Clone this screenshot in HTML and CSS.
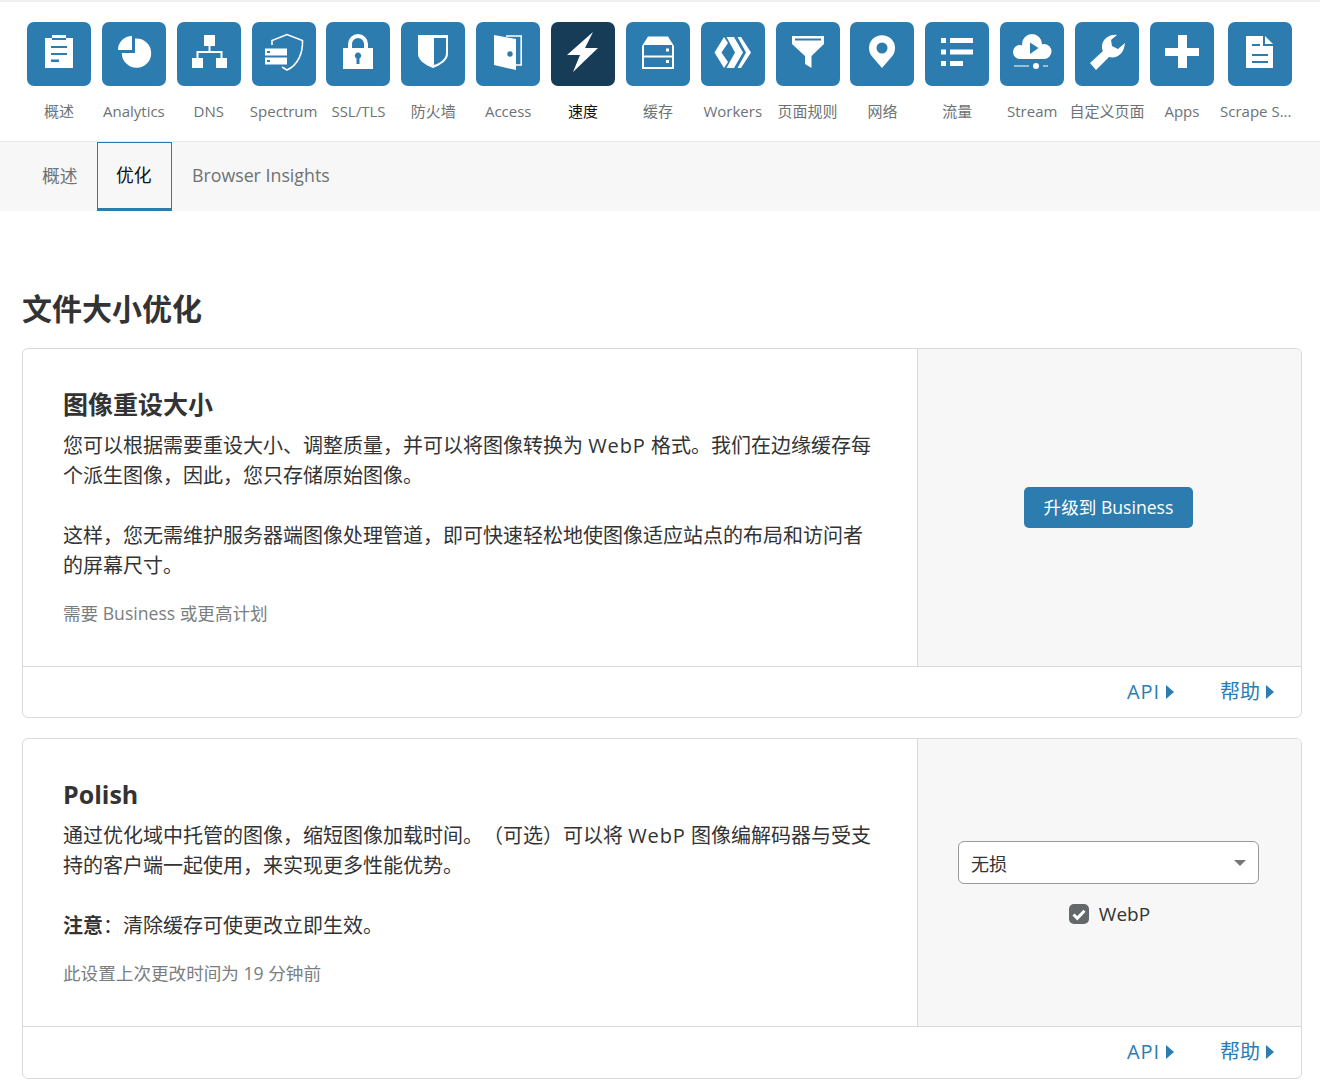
FILE: index.html
```html
<!DOCTYPE html>
<html lang="zh-CN">
<head>
  <meta charset="UTF-8">
  <title>速度 - 优化</title>
  <link rel="stylesheet" href="styles.css">
</head>
<body>
  <!-- App Navigation -->
  <nav class="app-nav">
    <a class="nav-item">
      <span class="nav-icon"><svg viewBox="0 0 64 64"><path class="w" d="M18 16H25V13H39V16H46V46H18Z"/><path class="b" d="M24 24H40V26H24ZM24 31H40V33H24ZM24 37.500H32V40H24ZM25 16H39V18H25Z"/></svg></span>
      <span class="nav-label">概述</span>
    </a>
    <a class="nav-item">
      <span class="nav-icon"><svg viewBox="0 0 64 64"><path class="w" d="M30 28H16A14 14 0 0 1 30 14ZM33 16.500A14.700 14.700 0 1 1 19.800 31H33Z"/></svg></span>
      <span class="nav-label">Analytics</span>
    </a>
    <a class="nav-item">
      <span class="nav-icon"><svg viewBox="0 0 64 64"><path class="w" d="M27 13H38V24H33.500V29H45.500V36H50V46H39V36H43.500V31H21.500V36H26V46H15V36H19.500V29H31.500V24H27Z"/></svg></span>
      <span class="nav-label">DNS</span>
    </a>
    <a class="nav-item">
      <span class="nav-icon"><svg viewBox="0 0 64 64"><path class="o" d="M20 23V18.500L35 12.500L50.500 18.500C51 31 46 43 35 48L30 45"/><path class="w" d="M13 26.500H35V33.500H13ZM13 35.500H35V42.500H13Z"/><path class="b" d="M15 29H18V31H15ZM15 38H18V40H15Z"/></svg></span>
      <span class="nav-label">Spectrum</span>
    </a>
    <a class="nav-item">
      <span class="nav-icon"><svg viewBox="0 0 64 64"><path class="o thick" d="M24 27V22A8 8 0 0 1 40 22V27"/><path class="w" d="M17 26H47V47H17Z"/><path class="b" d="M30.500 36.500A3.200 3.200 0 1 1 33.500 36.500V42H30.500Z"/></svg></span>
      <span class="nav-label">SSL/TLS</span>
    </a>
    <a class="nav-item">
      <span class="nav-icon"><svg viewBox="0 0 64 64"><path class="w" d="M17 13H47V32C47 38 40 43 32 46C24 43 17 38 17 32Z"/><path class="b" d="M33 16H45V31C45 37 39 41 33 43Z"/></svg></span>
      <span class="nav-label">防火墙</span>
    </a>
    <a class="nav-item">
      <span class="nav-icon"><svg viewBox="0 0 64 64"><path class="o" d="M30 14H45.200V43H40"/><path class="w" d="M18 13L40 17V48L18 43Z"/><circle class="b" cx="34" cy="32" r="2.700"/></svg></span>
      <span class="nav-label">Access</span>
    </a>
    <a class="nav-item active">
      <span class="nav-icon"><svg viewBox="0 0 64 64"><path class="w" d="M42 10L16 33H29L22 50L47 26H34Z"/></svg></span>
      <span class="nav-label">速度</span>
    </a>
    <a class="nav-item">
      <span class="nav-icon"><svg viewBox="0 0 64 64"><path class="w" d="M16 24L22 14.500H42L48 24V47H16Z"/><path class="b" d="M18 23H46V33.500H18ZM18 35.500H46V45H18Z"/><path class="w" d="M40 26.500H43V29.500H40ZM40 38H43V41H40Z"/></svg></span>
      <span class="nav-label">缓存</span>
    </a>
    <a class="nav-item">
      <span class="nav-icon"><svg viewBox="0 0 64 64"><path class="w" d="M23 15L13.500 30.500L23 46L27 40L20.500 30.500L27 21ZM25.500 15H33L42 30.500L33 46H25.500L34 30.500ZM36.500 15H40L50 30.500L40 46H36.500L45 30.500Z"/></svg></span>
      <span class="nav-label">Workers</span>
    </a>
    <a class="nav-item">
      <span class="nav-icon"><svg viewBox="0 0 64 64"><path class="w" d="M16 14H48V22L35.500 34V46L29 42V34L16 22Z"/><path class="b" d="M19 16.500H45V18.500H19Z"/></svg></span>
      <span class="nav-label">页面规则</span>
    </a>
    <a class="nav-item">
      <span class="nav-icon"><svg viewBox="0 0 64 64"><path class="w" d="M32 46L22.500 35A13 13 0 1 1 41.500 35Z"/><circle class="b" cx="32" cy="26" r="5.500"/></svg></span>
      <span class="nav-label">网络</span>
    </a>
    <a class="nav-item">
      <span class="nav-icon"><svg viewBox="0 0 64 64"><path class="w" d="M16 16H21V21H16ZM25 16H48V21H25ZM16 27.500H21V32.500H16ZM25 27.500H48V32.500H25ZM16 39H21V44H16ZM25 39H38V44H25Z"/></svg></span>
      <span class="nav-label">流量</span>
    </a>
    <a class="nav-item">
      <span class="nav-icon"><svg viewBox="0 0 64 64"><circle class="w" cx="32" cy="22" r="10"/><circle class="w" cx="20" cy="30" r="7"/><circle class="w" cx="44" cy="29.500" r="7.500"/><path class="w" d="M20 26H44V37H20Z"/><path class="b" d="M30 20.500L38.500 26L30 32Z"/><circle class="w" cx="36" cy="44" r="3"/><path class="w dim" d="M14 43H29V45H14ZM43 43H48V45H43Z"/></svg></span>
      <span class="nav-label">Stream</span>
    </a>
    <a class="nav-item">
      <span class="nav-icon"><svg viewBox="0 0 64 64"><path class="w" d="M42 13C35 12 28 16 27 24C27 26 27 28 28 29L15 41L21 48L34 35C42 37 49 32 50 21L43 27L37 24L36 18Z"/></svg></span>
      <span class="nav-label">自定义页面</span>
    </a>
    <a class="nav-item">
      <span class="nav-icon"><svg viewBox="0 0 64 64"><path class="w" d="M28 13H37V26H49V34H37V46H28V34H15V26H28Z"/></svg></span>
      <span class="nav-label">Apps</span>
    </a>
    <a class="nav-item last">
      <span class="nav-icon"><svg viewBox="0 0 64 64"><path class="w" d="M18 14H35V24H45V46H18ZM37 14L45 22H37Z"/><path class="b" d="M24 22H32V24H24ZM24 32H40V34H24ZM24 39H40V41H24Z"/></svg></span>
      <span class="nav-label">Scrape S...</span>
    </a>
  </nav>

  <!-- Sub Tabs -->
  <div class="tabs">
    <a class="tab">概述</a>
    <a class="tab active">优化</a>
    <a class="tab">Browser Insights</a>
  </div>

  <main class="content">
    <h2 class="section-title">文件大小优化</h2>

    <section class="card">
      <div class="card-body">
        <div class="card-text">
          <h3>图像重设大小</h3>
          <p>您可以根据需要重设大小、调整质量，并可以将图像转换为 <span class="en">WebP</span> 格式。我们在边缘缓存每<br>个派生图像，因此，您只存储原始图像。<br><br>这样，您无需维护服务器端图像处理管道，即可快速轻松地使图像适应站点的布局和访问者<br>的屏幕尺寸。</p>
          <p class="note">需要 Business 或更高计划</p>
        </div>
        <div class="card-control">
          <button class="btn">升级到 Business</button>
        </div>
      </div>
      <div class="card-footer">
        <a class="link"><span class="en">API</span></a>
        <a class="link">帮助</a>
      </div>
    </section>

    <section class="card">
      <div class="card-body">
        <div class="card-text">
          <h3>Polish</h3>
          <p>通过优化域中托管的图像，缩短图像加载时间。（可选）可以将 <span class="en">WebP</span> 图像编解码器与受支<br>持的客户端一起使用，来实现更多性能优势。<br><br><strong>注意</strong>：清除缓存可使更改立即生效。</p>
          <p class="note">此设置上次更改时间为 19 分钟前</p>
        </div>
        <div class="card-control">
          <div class="select-wrap">
            <select>
              <option>无损</option>
              <option>有损</option>
              <option>关闭</option>
            </select>
          </div>
          <label class="check">
            <svg viewBox="0 0 20 20"><rect width="20" height="20" rx="5" fill="#63686b"/><path d="M4.500 10.500L8.300 14.300L15.500 6.700" fill="none" stroke="#fff" stroke-width="3"/></svg>
            WebP
          </label>
        </div>
      </div>
      <div class="card-footer">
        <a class="link"><span class="en">API</span></a>
        <a class="link">帮助</a>
      </div>
    </section>
  </main>
</body>
</html>
```

FILE: styles.css
```css
/* General Reset */
* {
  margin: 0;
  padding: 0;
  box-sizing: border-box;
}

html, body {
  height: 100%;
  overflow: hidden;
}

body {
  font-family: 'Open Sans', 'Noto Sans CJK SC', sans-serif;
  color: #333;
  background: #fff;
  text-spacing-trim: space-all;
}

/* App Navigation */
.app-nav {
  display: flex;
  padding: 20px 0 19px 21.6px;
  border-top: 2px solid #f0f0f0;
  border-bottom: 1px solid #e8e8e8;
}

.nav-item {
  display: flex;
  flex-direction: column;
  align-items: center;
  width: 74.87px;
  flex: none;
}

.nav-item.last {
  margin-left: 3px;
}

.nav-icon {
  width: 64px;
  height: 64px;
  border-radius: 7px;
  background: #2c7cb0;
}

.nav-icon svg {
  display: block;
  width: 64px;
  height: 64px;
}

.nav-icon .w { fill: #fff; }
.nav-icon .b { fill: #2c7cb0; }
.nav-icon .dim { opacity: 0.5; }

.nav-icon .o {
  fill: none;
  stroke: #fff;
  stroke-width: 1.6;
}

.nav-icon .thick {
  stroke-width: 4;
}

.nav-label {
  margin-top: 15px;
  margin-bottom: 1px;
  font-size: 15px;
  line-height: 20px;
  white-space: nowrap;
  color: #6d7275;
}

.last .nav-label {
  margin-left: -8px;
}

.nav-item.active .nav-icon {
  background: #163c57;
}

.nav-item.active .nav-label {
  color: #111;
}

/* Sub Tabs */
.tabs {
  display: flex;
  height: 69px;
  padding-left: 22px;
  background: #f7f7f7;
}

.tab {
  display: flex;
  align-items: center;
  padding: 0 19.4px 3px 20px;
  font-size: 17.8px;
  color: #6d7275;
}

.tab.active {
  color: #111;
  padding: 0 19.4px 3px 18px;
  border: 1px solid #2c7cb0;
  border-bottom: 3px solid #2c7cb0;
}

/* Main Content */
.content {
  padding: 78px 18px 0 22px;
}

.section-title {
  font-size: 30px;
  line-height: 40px;
  font-weight: 700;
  margin-bottom: 19px;
}

.card {
  border: 1px solid #d9d9d9;
  border-radius: 6px;
  margin-bottom: 20px;
  overflow: hidden;
}

.card-body {
  display: flex;
  border-bottom: 1px solid #d9d9d9;
}

.card-text {
  flex: 1;
  padding: 40px 40px 38px;
}

.card-text h3 {
  font-size: 25px;
  line-height: 30px;
  font-weight: 700;
  margin-bottom: 12px;
}

.card-text p {
  font-size: 20px;
  line-height: 30px;
}

.card-text p.note {
  margin-top: 17px;
  font-size: 17.6px;
  color: #7a7e80;
}

.en {
  letter-spacing: 0.9px;
}

.card-control {
  width: 384px;
  flex: none;
  display: flex;
  flex-direction: column;
  align-items: center;
  justify-content: center;
  padding: 0 40px;
  background: #f7f7f7;
  border-left: 1px solid #d9d9d9;
}

.btn {
  width: 169px;
  height: 41px;
  padding-bottom: 3px;
  margin-left: -2px;
  border: none;
  border-radius: 5px;
  background: #2c7cb0;
  color: #fff;
  font-family: inherit;
  font-size: 17.6px;
}

.select-wrap {
  position: relative;
  width: 301px;
  margin-top: 1px;
  margin-left: -2px;
}

.select-wrap::after {
  content: "";
  position: absolute;
  top: 19px;
  right: 13px;
  border-left: 6px solid transparent;
  border-right: 6px solid transparent;
  border-top: 6px solid #777;
}

.select-wrap select {
  display: block;
  width: 100%;
  height: 43px;
  padding-left: 12px;
  padding-top: 2px;
  appearance: none;
  border: 1px solid #999;
  border-radius: 6px;
  background: #fff;
  color: #333;
  font-family: inherit;
  font-size: 18px;
}

.check {
  display: flex;
  align-items: center;
  gap: 10px;
  margin-top: 19px;
  font-size: 19px;
  line-height: 22px;
}

.check svg {
  width: 20px;
  height: 20px;
}

.card-footer {
  display: flex;
  justify-content: flex-end;
  align-items: center;
  gap: 46px;
  height: 50px;
  padding-right: 27px;
}

.card + .card .card-footer {
  height: 51px;
}

.link {
  display: flex;
  align-items: center;
  gap: 6px;
  font-size: 20px;
  line-height: 28px;
  padding-bottom: 1px;
  color: #2c7cb0;
}

.link::after {
  content: "";
  border-left: 8px solid #2c7cb0;
  border-top: 7px solid transparent;
  border-bottom: 7px solid transparent;
}
```
